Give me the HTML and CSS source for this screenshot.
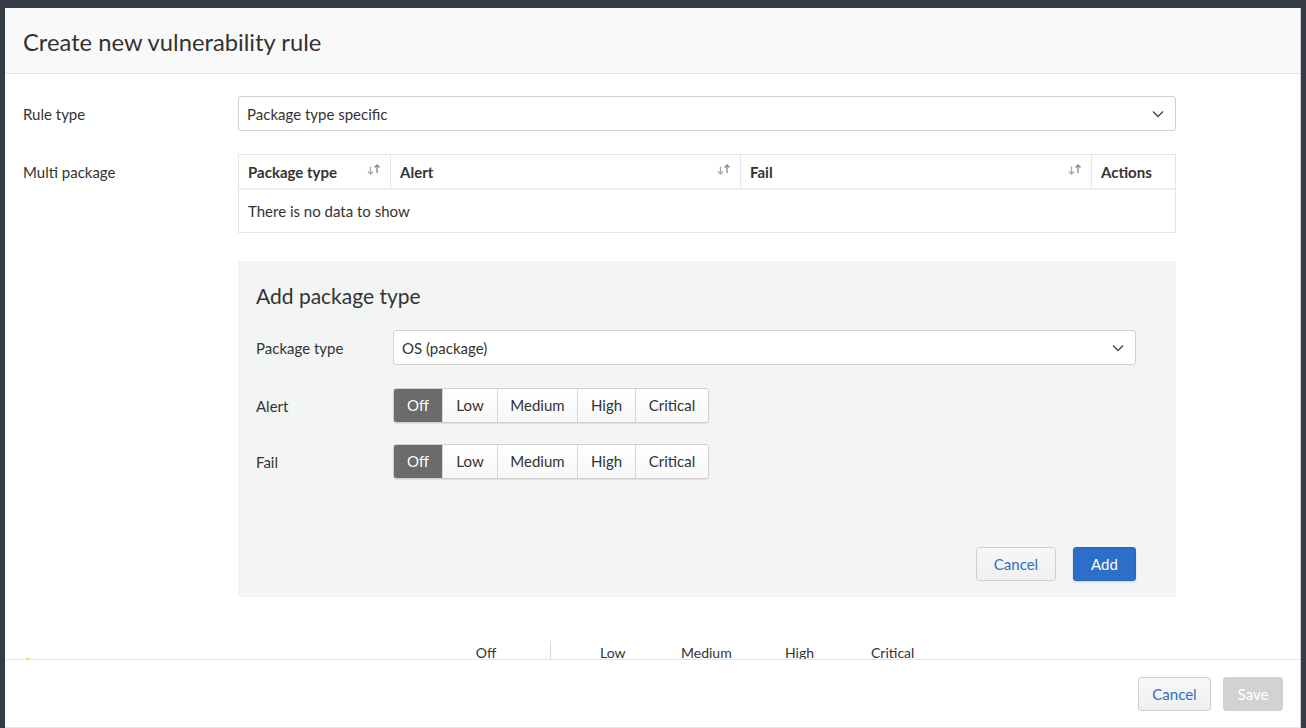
FILE: index.html
```html
<!DOCTYPE html>
<html>
<head>
<meta charset="utf-8">
<link rel="stylesheet" href="styles.css">
</head>
<body>
<div class="modal">
  <div class="modal-header">
    <h1 class="title">Create new vulnerability rule</h1>
  </div>
  <div class="modal-body">
    <div class="form-row">
      <div class="label">Rule type</div>
      <div class="field">
        <div class="select">
          <span>Package type specific</span>
          <svg class="chev" width="12" height="8" viewBox="0 0 12 8"><path d="M1 1.5 L6 6.5 L11 1.5" fill="none" stroke="#444" stroke-width="1.3"/></svg>
        </div>
      </div>
    </div>
    <div class="form-row table-row">
      <div class="label">Multi package</div>
      <div class="field">
        <div class="table">
          <div class="thead">
            <div class="th c1"><span>Package type</span><svg class="sort" width="16" height="13" viewBox="0 0 16 13"><path d="M4.5 3.5 V11 M2 8.5 L4.5 11 L7 8.5" fill="none" stroke="#aaa" stroke-width="1.3"/><path d="M11 10 V2 M8.5 4.5 L11 2 L13.5 4.5" fill="none" stroke="#888" stroke-width="1.3"/></svg></div>
            <div class="th c2"><span>Alert</span><svg class="sort" width="16" height="13" viewBox="0 0 16 13"><path d="M4.5 3.5 V11 M2 8.5 L4.5 11 L7 8.5" fill="none" stroke="#aaa" stroke-width="1.3"/><path d="M11 10 V2 M8.5 4.5 L11 2 L13.5 4.5" fill="none" stroke="#888" stroke-width="1.3"/></svg></div>
            <div class="th c3"><span>Fail</span><svg class="sort" width="16" height="13" viewBox="0 0 16 13"><path d="M4.5 3.5 V11 M2 8.5 L4.5 11 L7 8.5" fill="none" stroke="#aaa" stroke-width="1.3"/><path d="M11 10 V2 M8.5 4.5 L11 2 L13.5 4.5" fill="none" stroke="#888" stroke-width="1.3"/></svg></div>
            <div class="th c4"><span>Actions</span></div>
          </div>
          <div class="tbody">There is no data to show</div>
        </div>

        <div class="panel">
          <h2 class="panel-title">Add package type</h2>
          <div class="prow">
            <div class="plabel">Package type</div>
            <div class="select pselect">
              <span>OS (package)</span>
              <svg class="chev" width="12" height="8" viewBox="0 0 12 8"><path d="M1 1.5 L6 6.5 L11 1.5" fill="none" stroke="#444" stroke-width="1.3"/></svg>
            </div>
          </div>
          <div class="prow seg-row">
            <div class="plabel">Alert</div>
            <div class="seg">
              <div class="seg-item active s-off">Off</div>
              <div class="seg-item s-low">Low</div>
              <div class="seg-item s-med">Medium</div>
              <div class="seg-item s-high">High</div>
              <div class="seg-item s-crit">Critical</div>
            </div>
          </div>
          <div class="prow seg-row">
            <div class="plabel">Fail</div>
            <div class="seg">
              <div class="seg-item active s-off">Off</div>
              <div class="seg-item s-low">Low</div>
              <div class="seg-item s-med">Medium</div>
              <div class="seg-item s-high">High</div>
              <div class="seg-item s-crit">Critical</div>
            </div>
          </div>
          <div class="panel-actions">
            <button class="btn btn-default">Cancel</button>
            <button class="btn btn-primary">Add</button>
          </div>
        </div>
      </div>
    </div>
    <div class="scale-row">
      <span class="dot"></span>
      <div class="scale">
        <span class="sc sc-off">Off</span>
        <span class="sc-div"></span>
        <span class="sc sc-low">Low</span>
        <span class="sc sc-med">Medium</span>
        <span class="sc sc-high">High</span>
        <span class="sc sc-crit">Critical</span>
      </div>
    </div>
  </div>
  <div class="modal-footer">
    <button class="btn btn-default">Cancel</button>
    <button class="btn btn-disabled">Save</button>
  </div>
</div>
</body>
</html>
```

FILE: styles.css
```css
* { box-sizing: border-box; }
html, body { margin: 0; padding: 0; }
body {
  background: #363c46;
  font-family: Lato, "Open Sans", sans-serif;
  color: #333;
  height: 728px;
  overflow: hidden;
}
.modal {
  margin: 8px 5px 0 5px;
  height: 720px;
  background: #fff;
  display: flex;
  flex-direction: column;
  border-right: 1px solid #cfd2d6;
}
.modal-header {
  height: 66px;
  flex: none;
  background: #f9f9f9;
  border-bottom: 1px solid #e3e3e3;
  display: flex;
  align-items: center;
  padding: 0 18px;
}
.title {
  margin: 0;
  font-size: 23.75px;
  font-weight: 400;
  color: #333;
  position: relative;
  top: 1px;
}
.modal-body {
  flex: 1;
  overflow: hidden;
  padding: 22px 0 0 18px;
}
.form-row {
  display: flex;
  font-size: 15px;
}
.label {
  width: 215px;
  flex: none;
  line-height: 35px;
  position: relative;
  top: 1px;
}
.field {
  width: 938px;
  flex: none;
}
.table-row { margin-top: 23px; }
.select {
  height: 35px;
  border: 1px solid #d0d0d0;
  border-radius: 3px;
  background: #fff;
  display: flex;
  align-items: center;
  justify-content: space-between;
  padding: 0 11px 0 8px;
  font-size: 15px;
  color: #333;
}
.table {
  border: 1px solid #e6e6e6;
}
.thead {
  display: flex;
  height: 35px;
  border-bottom: 2px solid #eeeeee;
  font-weight: 700;
}
.th {
  display: flex;
  align-items: center;
  justify-content: space-between;
  padding: 0 8px 0 9px;
  border-right: 1px solid #e6e6e6;
}
.th:last-child { border-right: none; }
.c1 { width: 152px; }
.c2 { width: 350px; }
.c3 { width: 351px; }
.c4 { flex: 1; }
.sort { position: relative; top: -2px; }
.tbody {
  height: 42px;
  line-height: 42px;
  padding-left: 9px;
}
.panel {
  margin-top: 28px;
  background: #f3f4f4;
  height: 336px;
  padding: 20px 40px 0 18px;
  display: flex;
  flex-direction: column;
}
.panel-title {
  margin: 0;
  font-size: 21px;
  font-weight: 400;
  color: #333;
  line-height: 30px;
}
.prow {
  display: flex;
  align-items: center;
  margin-top: 19px;
}
.seg-row { margin-top: 23px; }
.seg-row + .seg-row { margin-top: 21px; }
.plabel { width: 137px; flex: none; }
.pselect { flex: 1; }
.seg {
  display: flex;
  height: 35px;
  border: 1px solid #cfcfcf;
  border-radius: 3px;
  box-shadow: 0 1px 1px rgba(0,0,0,0.08);
  overflow: hidden;
  background: #fff;
}
.seg-item {
  display: flex;
  align-items: center;
  justify-content: center;
  border-left: 1px solid #d6d6d6;
  color: #333;
  background: linear-gradient(#ffffff, #f7f7f7);
  padding-bottom: 1px;
}
.seg-item:first-child { border-left: none; }
.seg-item.active { background: #6b6b6b; color: #fff; }
.s-off { width: 48px; }
.s-low { width: 55px; }
.s-med { width: 80px; }
.s-high { width: 58px; }
.s-crit { width: 73px; }
.panel-actions {
  margin-top: auto;
  margin-bottom: 16px;
  display: flex;
  justify-content: flex-end;
  gap: 17px;
}
.btn {
  font-family: Lato, "Open Sans", sans-serif;
  font-size: 15px;
  height: 34px;
  border-radius: 3px;
  cursor: pointer;
  padding-bottom: 2px;
}
.btn-default {
  width: 80px;
  background: linear-gradient(#f7f7f7, #f0f0f0);
  border: 1px solid #cfcfcf;
  color: #2d6ec8;
}
.btn-primary {
  width: 63px;
  background: #2d6ec8;
  border: 1px solid #2a66ba;
  color: #fff;
  box-shadow: 0 1px 2px rgba(0,0,0,0.15);
}
.scale-row {
  display: flex;
  align-items: flex-end;
  margin-top: 44px;
  height: 20px;
  position: relative;
}
.dot {
  position: absolute;
  left: 3px;
  top: 17px;
  width: 3px;
  height: 2px;
  background: #f3c26a;
}
.scale {
  display: flex;
  align-items: flex-start;
  margin-left: 441px;
  font-size: 14px;
  height: 20px;
}
.sc { line-height: 18px; padding-top: 3px; }
.sc-off { width: 44px; text-align: center; }
.sc-div { width: 1px; height: 20px; background: #d6d6d6; margin-left: 42px; margin-right: 49px; }
.sc-low { width: 26px; }
.sc-med { margin-left: 55px; width: 51px; }
.sc-high { margin-left: 53px; width: 30px; }
.sc-crit { margin-left: 56px; }
.modal-footer {
  flex: none;
  height: 69px;
  border-top: 1px solid #e6e6e6;
  border-bottom: 1px solid #e6e6e6;
  display: flex;
  justify-content: flex-end;
  align-items: flex-start;
  padding: 17px 17px 0 0;
  gap: 12px;
  background: #fff;
}
.modal-footer .btn-default { width: 73px; height: 34px; }
.btn-disabled {
  width: 60px;
  background: #d2d2d2;
  border: 1px solid #d2d2d2;
  color: #fff;
}
```
